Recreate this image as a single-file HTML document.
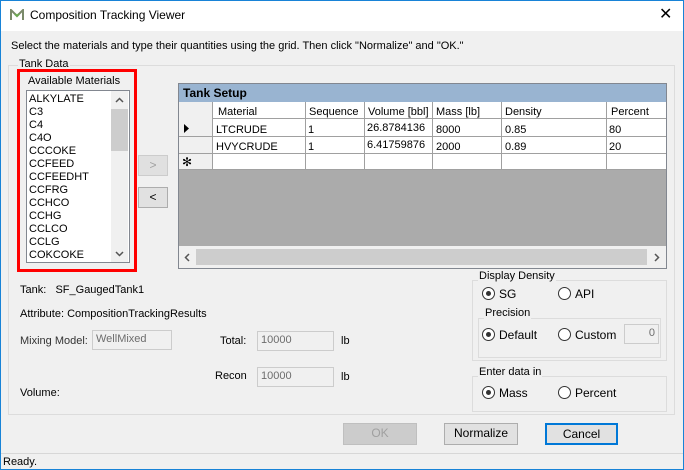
<!DOCTYPE html>
<html><head><style>
*{box-sizing:border-box}
body{margin:0;width:684px;height:470px;overflow:hidden;font-family:"Liberation Sans",sans-serif;font-size:11px;color:#000;background:#f0f0f0;position:relative}
.a{position:absolute}
.win{left:0;top:0;width:684px;height:470px;border:1px solid #1883d7}
.title{left:1px;top:1px;width:682px;height:30px;background:#fff}
.tb{border:1px solid #cccccc;background:#f0f0f0;color:#6d6d6d;padding:2px 3px;height:20px}
.btn{border:1px solid #adadad;background:#e1e1e1;text-align:center;line-height:19px;font-size:12px}
.grp{border:1px solid #dcdcdc}
.lbl{background:#f0f0f0;padding:0 1px}
.radio{width:13px;height:13px;border:1px solid #333;border-radius:50%;background:#fff}
.dot{width:5px;height:5px;border-radius:50%;background:#333;left:3px;top:3px}
</style></head><body>
<div class="a win"></div>
<div class="a title"></div>
<svg class="a" style="left:10px;top:9px" width="14" height="12"><path d="M1 11V1L7 7L13 1V11" stroke="#7a8a6a" stroke-width="2" fill="none"/><path d="M5 5L7 7L9 5" stroke="#6aa84f" stroke-width="2" fill="none"/></svg>
<div class="a" style="left:30px;top:8px;font-size:12px">Composition Tracking Viewer</div>
<div class="a" style="left:659px;top:4px;font-size:16px">✕</div>
<div class="a" style="left:11px;top:40px">Select the materials and type their quantities using the grid. Then click "Normalize" and "OK."</div>
<div class="a grp" style="left:8px;top:65px;width:667px;height:350px"></div>
<div class="a lbl" style="left:18px;top:58px">Tank Data</div>
<div class="a" style="left:17px;top:69px;width:120px;height:203px;border:3px solid #f00"></div>
<div class="a" style="left:28px;top:75px">Available Materials</div>
<div class="a" style="left:26px;top:90px;width:104px;height:173px;background:#fff;border:1px solid #828790"></div>
<div class="a" style="left:29px;top:93px;line-height:13px;font-size:11px">ALKYLATE<br>C3<br>C4<br>C4O<br>CCCOKE<br>CCFEED<br>CCFEEDHT<br>CCFRG<br>CCHCO<br>CCHG<br>CCLCO<br>CCLG<br>COKCOKE</div>
<div class="a" style="left:111px;top:91px;width:17px;height:171px;background:#f0f0f0"></div>
<div class="a" style="left:111px;top:109px;width:17px;height:42px;background:#cdcdcd"></div>
<svg class="a" style="left:115px;top:97px" width="9" height="6"><path d="M1 5L4.5 1.5L8 5" stroke="#555" stroke-width="1.5" fill="none"/></svg>
<svg class="a" style="left:115px;top:251px" width="9" height="6"><path d="M1 1L4.5 4.5L8 1" stroke="#555" stroke-width="1.5" fill="none"/></svg>
<div class="a btn" style="left:138px;top:155px;width:30px;height:21px;color:#a0a0a0;border-color:#ccc;background:#e0e0e0">&gt;</div>
<div class="a btn" style="left:138px;top:187px;width:30px;height:21px">&lt;</div>
<div class="a" style="left:178px;top:83px;width:489px;height:186px;border:1px solid #828790;background:#ababab"></div>
<div class="a" style="left:179px;top:84px;width:487px;height:18px;background:#99b4d1;font-weight:bold;font-size:12px;padding:2px 4px">Tank Setup</div>
<div class="a" style="left:179px;top:102px;width:487px;height:68px;background:#fff"></div>
<div class="a" style="left:179px;top:102px;width:487px;height:17px;background:#fff;border-bottom:1px solid #a0a0a0"></div>
<div class="a" style="left:179px;top:102px;width:34px;height:68px;background:#f0f0f0;border-right:1px solid #a0a0a0"></div>
<div class="a" style="left:179px;top:136px;width:487px;height:1px;background:#a0a0a0"></div>
<div class="a" style="left:179px;top:153px;width:487px;height:1px;background:#a0a0a0"></div>
<div class="a" style="left:179px;top:169px;width:487px;height:1px;background:#a0a0a0"></div>
<div class="a" style="left:305px;top:102px;width:1px;height:68px;background:#a0a0a0"></div>
<div class="a" style="left:364px;top:102px;width:1px;height:68px;background:#a0a0a0"></div>
<div class="a" style="left:432px;top:102px;width:1px;height:68px;background:#a0a0a0"></div>
<div class="a" style="left:501px;top:102px;width:1px;height:68px;background:#a0a0a0"></div>
<div class="a" style="left:606px;top:102px;width:1px;height:68px;background:#a0a0a0"></div>
<div class="a" style="left:0;top:104px;line-height:17px">
<span class="a" style="left:218px;top:0">Material</span><span class="a" style="left:309px">Sequence</span><span class="a" style="left:368px;white-space:nowrap">Volume [bbl]</span><span class="a" style="left:436px;white-space:nowrap">Mass [lb]</span><span class="a" style="left:505px">Density</span><span class="a" style="left:611px">Percent</span></div>
<div class="a" style="left:0;top:122px;font-size:11px">
<span class="a" style="left:216px;top:2px">LTCRUDE</span><span class="a" style="left:308px;top:2px">1</span><span class="a" style="left:367px;top:0">26.8784136</span><span class="a" style="left:436px;top:2px">8000</span><span class="a" style="left:505px;top:2px">0.85</span><span class="a" style="left:609px;top:2px">80</span>
<span class="a" style="left:216px;top:19px">HVYCRUDE</span><span class="a" style="left:308px;top:19px">1</span><span class="a" style="left:367px;top:17px">6.41759876</span><span class="a" style="left:436px;top:19px">2000</span><span class="a" style="left:505px;top:19px">0.89</span><span class="a" style="left:609px;top:19px">20</span></div>
<svg class="a" style="left:184px;top:124px" width="6" height="9"><path d="M0 0L5 4.5L0 9Z" fill="#000"/></svg>
<div class="a" style="left:182px;top:155px;font-size:12px">✻</div>
<div class="a" style="left:179px;top:246px;width:487px;height:22px;background:#f0f0f0"></div>
<div class="a" style="left:196px;top:249px;width:451px;height:16px;background:#cdcdcd"></div>
<svg class="a" style="left:184px;top:253px" width="6" height="9"><path d="M5 1L1.5 4.5L5 8" stroke="#555" stroke-width="1.5" fill="none"/></svg>
<svg class="a" style="left:654px;top:253px" width="6" height="9"><path d="M1 1L4.5 4.5L1 8" stroke="#555" stroke-width="1.5" fill="none"/></svg>
<div class="a" style="left:20px;top:284px">Tank: &nbsp; SF_GaugedTank1</div>
<div class="a" style="left:20px;top:308px">Attribute: CompositionTrackingResults</div>
<div class="a" style="left:20px;top:335px;color:#333">Mixing Model:</div>
<div class="a tb" style="left:92px;top:330px;width:80px">WellMixed</div>
<div class="a" style="left:220px;top:335px">Total:</div>
<div class="a tb" style="left:257px;top:331px;width:77px">10000</div>
<div class="a" style="left:341px;top:335px">lb</div>
<div class="a" style="left:215px;top:370px">Recon</div>
<div class="a tb" style="left:257px;top:367px;width:77px">10000</div>
<div class="a" style="left:341px;top:371px">lb</div>
<div class="a" style="left:20px;top:387px">Volume:</div>
<div class="a grp" style="left:472px;top:280px;width:195px;height:81px"></div>
<div class="a lbl" style="left:478px;top:270px">Display Density</div>
<div class="a radio" style="left:482px;top:287px"><div class="a dot"></div></div><div class="a" style="left:499px;top:287px;font-size:12px">SG</div>
<div class="a radio" style="left:558px;top:287px"></div><div class="a" style="left:575px;top:287px;font-size:12px">API</div>
<div class="a grp" style="left:478px;top:318px;width:183px;height:40px"></div>
<div class="a lbl" style="left:484px;top:307px">Precision</div>
<div class="a radio" style="left:482px;top:328px"><div class="a dot"></div></div><div class="a" style="left:499px;top:328px;font-size:12px">Default</div>
<div class="a radio" style="left:558px;top:328px"></div><div class="a" style="left:575px;top:328px;font-size:12px">Custom</div>
<div class="a tb" style="left:624px;top:324px;width:35px;text-align:right">0</div>
<div class="a grp" style="left:472px;top:376px;width:195px;height:36px"></div>
<div class="a lbl" style="left:478px;top:366px">Enter data in</div>
<div class="a radio" style="left:482px;top:386px"><div class="a dot"></div></div><div class="a" style="left:499px;top:386px;font-size:12px">Mass</div>
<div class="a radio" style="left:558px;top:386px"></div><div class="a" style="left:575px;top:386px;font-size:12px">Percent</div>
<div class="a btn" style="left:343px;top:423px;width:74px;height:22px;color:#a0a0a0;border-color:#bfbfbf;background:#cccccc">OK</div>
<div class="a btn" style="left:444px;top:423px;width:74px;height:22px">Normalize</div>
<div class="a btn" style="left:545px;top:423px;width:73px;height:22px;border:2px solid #0078d7">Cancel</div>
<div class="a" style="left:1px;top:453px;width:682px;height:1px;background:#d7d7d7"></div>
<div class="a" style="left:3px;top:456px">Ready.</div>
</body></html>
